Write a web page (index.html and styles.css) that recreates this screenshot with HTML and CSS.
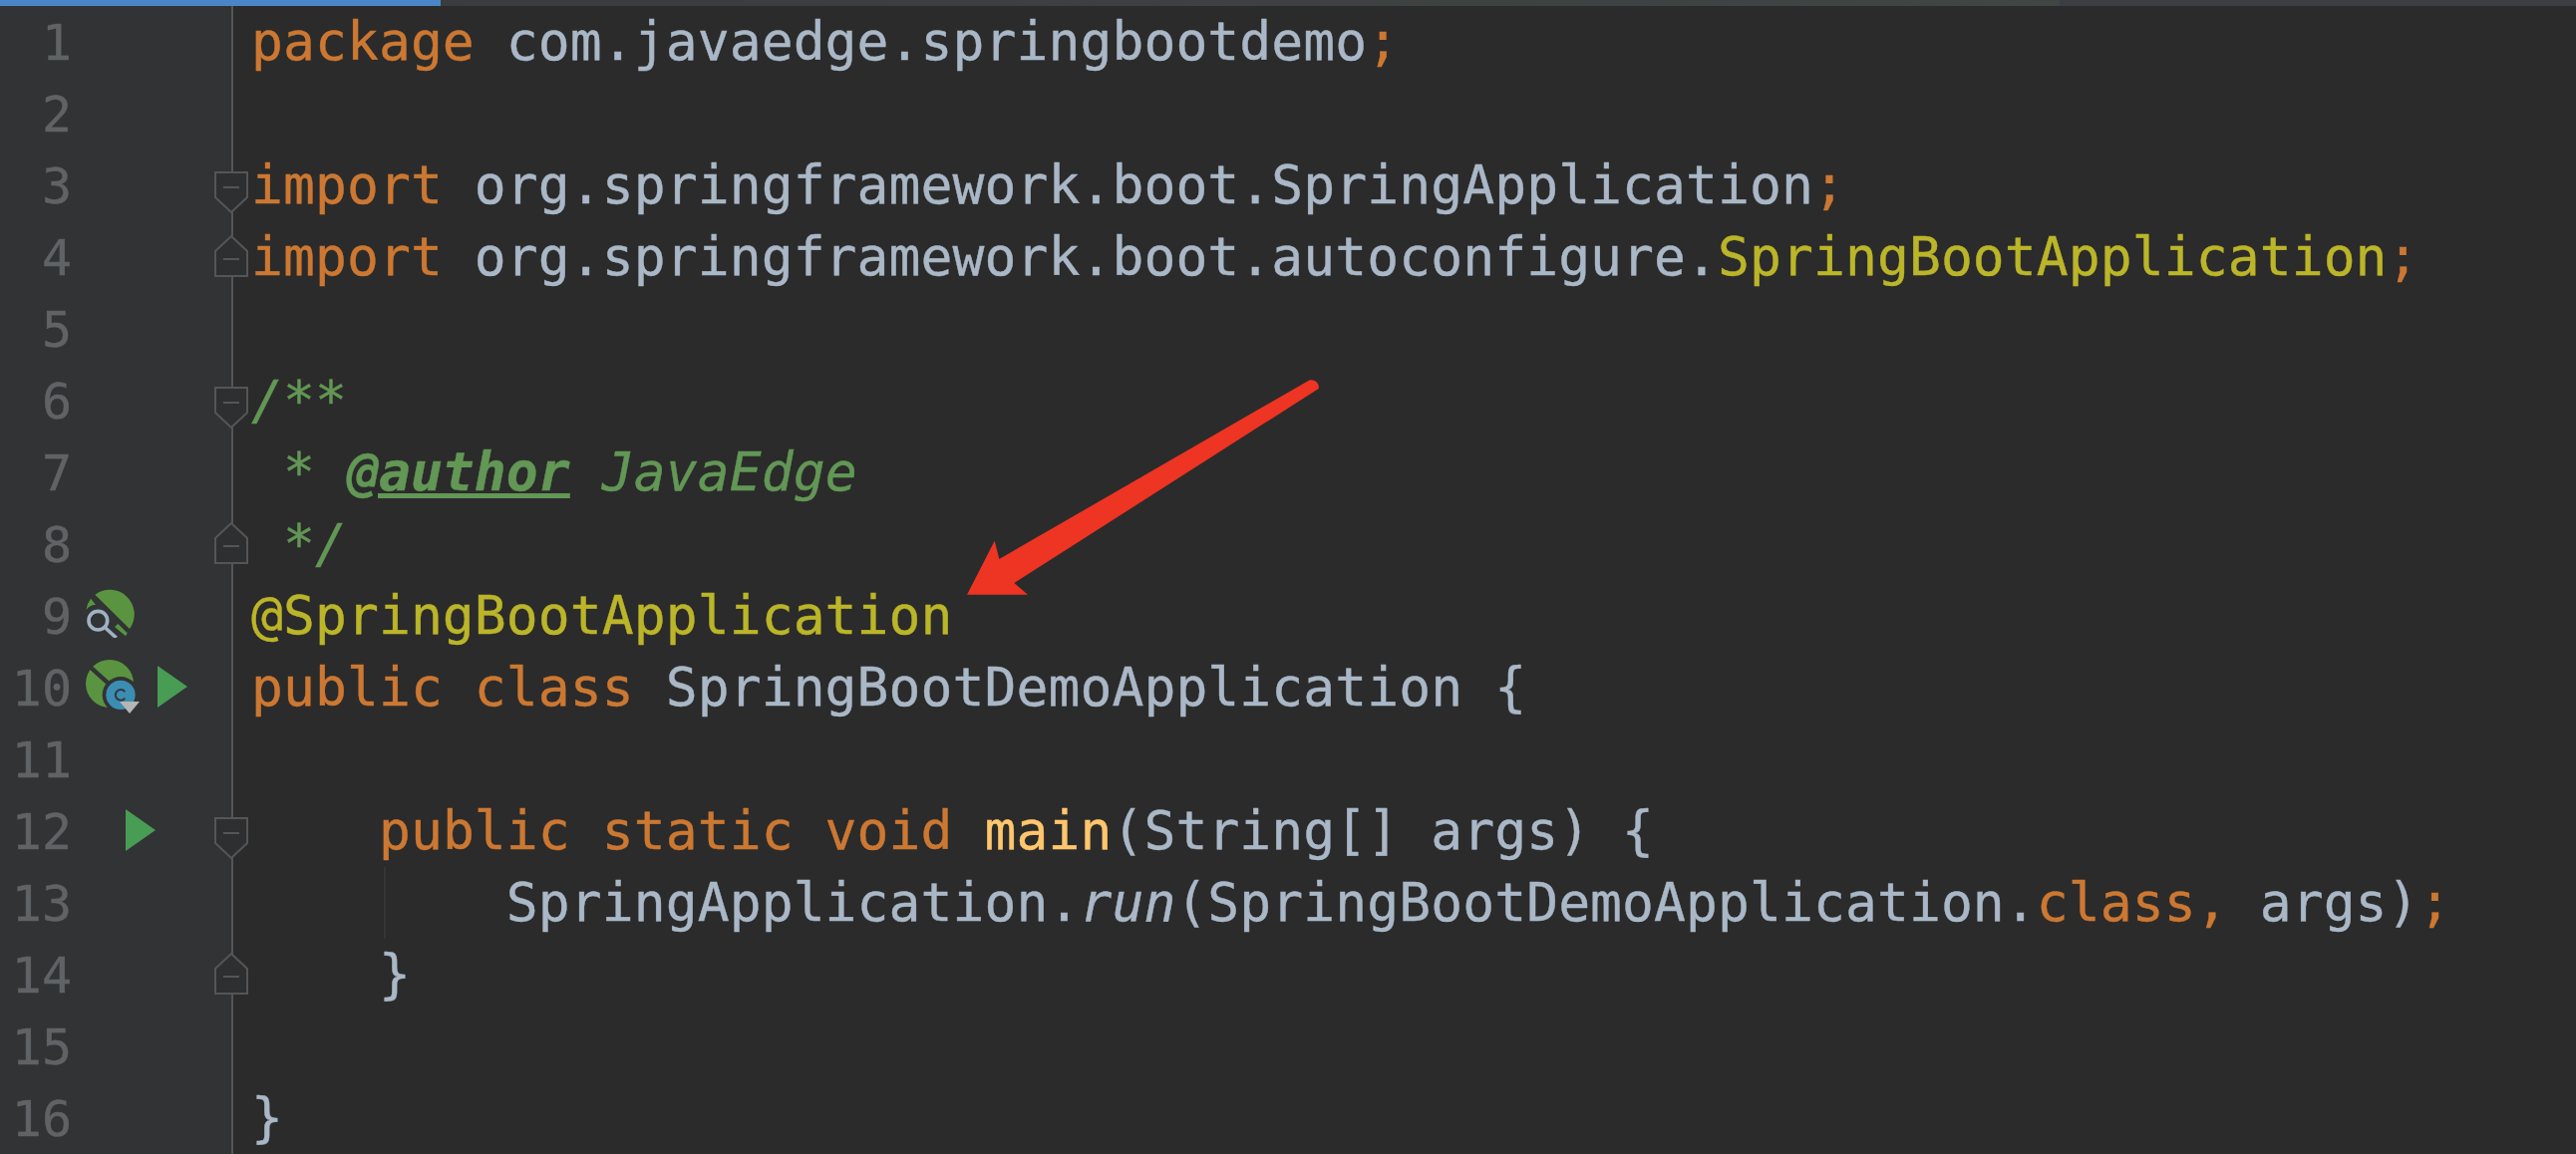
FILE: index.html
```html
<!DOCTYPE html>
<html lang="en">
<head>
<meta charset="utf-8">
<title>SpringBootDemoApplication.java</title>
<link rel="stylesheet" href="styles.css">
</head>
<body>
<div class="tabbar"><div class="tab-active"></div><div class="tab-mid"></div><div class="tab-end"></div></div>
<main class="editor">
  <aside class="gutter">
    <div class="grow"><span class="num">1</span></div>
    <div class="grow"><span class="num">2</span></div>
    <div class="grow"><span class="num">3</span><svg class="fold fold-open" viewBox="0 0 34 42"><path class="fold-shape" d="M1 1H33V26L17 41L1 26Z"/><path class="fold-minus" d="M9 16H25"/></svg></div>
    <div class="grow"><span class="num">4</span><svg class="fold fold-close" viewBox="0 0 34 42"><path class="fold-shape" d="M17 1L33 16V41H1V16Z"/><path class="fold-minus" d="M9 24H25"/></svg></div>
    <div class="grow"><span class="num">5</span></div>
    <div class="grow"><span class="num">6</span><svg class="fold fold-open" viewBox="0 0 34 42"><path class="fold-shape" d="M1 1H33V26L17 41L1 26Z"/><path class="fold-minus" d="M9 16H25"/></svg></div>
    <div class="grow"><span class="num">7</span></div>
    <div class="grow"><span class="num">8</span><svg class="fold fold-close" viewBox="0 0 34 42"><path class="fold-shape" d="M17 1L33 16V41H1V16Z"/><path class="fold-minus" d="M9 24H25"/></svg></div>
    <div class="grow"><span class="num">9</span>
      <svg class="bean bean-find" viewBox="75 30 150 150">
        <path class="leaf" d="M106 50A74 74 0 0 1 210 153Z"/>
        <path class="leaf" d="M79 96A74 74 0 0 1 93 62L108 80Q88 82 79 96Z"/>
        <path class="leaf" d="M175 138L203 166L198 175L165 147Z"/>
        <circle class="lens" cx="115" cy="128" r="28"/>
        <path class="lens" d="M137 150L170 180"/>
      </svg>
    </div>
    <div class="grow"><span class="num">10</span>
      <svg class="bean bean-class" viewBox="75 240 180 180">
        <circle class="leaf" cx="150" cy="318" r="72"/>
        <path class="bean-cut" d="M85 262L155 325"/>
        <circle class="bean-halo" cx="183" cy="352" r="55"/>
        <circle class="badge" cx="183" cy="352" r="44"/>
        <path class="badge-c" d="M196 342A16 16 0 1 0 196 362"/>
        <path class="badge-arrow" d="M180 372H240L210 408Z"/>
      </svg>
      <svg class="run run-class" viewBox="0 0 30 42"><path d="M0 0L30 21L0 42Z"/></svg>
    </div>
    <div class="grow"><span class="num">11</span></div>
    <div class="grow"><span class="num">12</span>
      <svg class="run run-method" viewBox="0 0 30 42"><path d="M0 0L30 21L0 42Z"/></svg>
      <svg class="fold fold-open" viewBox="0 0 34 42"><path class="fold-shape" d="M1 1H33V26L17 41L1 26Z"/><path class="fold-minus" d="M9 16H25"/></svg>
    </div>
    <div class="grow"><span class="num">13</span></div>
    <div class="grow"><span class="num">14</span><svg class="fold fold-close" viewBox="0 0 34 42"><path class="fold-shape" d="M17 1L33 16V41H1V16Z"/><path class="fold-minus" d="M9 24H25"/></svg></div>
    <div class="grow"><span class="num">15</span></div>
    <div class="grow"><span class="num">16</span></div>
  </aside>
  <section class="code">
    <div class="ln"><span class="kw">package</span> com.javaedge.springbootdemo<span class="kw">;</span></div>
    <div class="ln"></div>
    <div class="ln"><span class="kw">import</span> org.springframework.boot.SpringApplication<span class="kw">;</span></div>
    <div class="ln"><span class="kw">import</span> org.springframework.boot.autoconfigure.<span class="ann">SpringBootApplication</span><span class="kw">;</span></div>
    <div class="ln"></div>
    <div class="ln doc">/**</div>
    <div class="ln doc"> * <span class="doctag">@author</span> <span class="docval">JavaEdge</span></div>
    <div class="ln doc"> */</div>
    <div class="ln ann">@SpringBootApplication</div>
    <div class="ln"><span class="kw">public class</span> SpringBootDemoApplication {</div>
    <div class="ln"></div>
    <div class="ln">    <span class="kw">public static void</span> <span class="fn">main</span>(String[] args) {</div>
    <div class="ln guide">        SpringApplication.<em>run</em>(SpringBootDemoApplication.<span class="kw">class,</span> args)<span class="kw">;</span></div>
    <div class="ln">    }</div>
    <div class="ln"></div>
    <div class="ln">}</div>
    <svg class="arrow" viewBox="0 0 380 230"><path d="M30 226.7H91L77.3 215L382.7 20C384 14 378 10 373 11.7L62.3 191L57.7 172.7Z"/></svg>
  </section>
</main>
</body>
</html>
```
FILE: styles.css
```css
* { box-sizing: border-box; }
html, body { margin: 0; height: 100%; background: #2b2b2b; overflow: hidden; }
body { font-family: "DejaVu Sans Mono", "Liberation Mono", monospace; }

.tabbar { display: flex; height: 6px; background: #2b2b2b; }
.tab-active { width: 442px; background: #4a86c7; }
.tab-mid { width: 1624px; background: linear-gradient(90deg, #3a3c3e, #3f4644); }
.tab-end { flex: 1; background: #3b3f44; }

.editor { display: flex; height: 1152px; }

.gutter { width: 234px; flex: none; background: #313335; border-right: 2px solid #555555; }
.grow { position: relative; display: flex; align-items: flex-start; height: 72px; }
.num { width: 72px; margin-top: 1px; font-size: 50px; line-height: 72px; text-align: right; color: #606366; -webkit-text-stroke: 0.4px #606366; }

.fold { position: absolute; right: -17px; width: 34px; height: 42px; }
.fold-open { top: 22px; }
.fold-close { top: 14px; }
.fold-shape { fill: #2e2f31; stroke: #555555; stroke-width: 2; }
.fold-minus { fill: none; stroke: #555555; stroke-width: 2; }

.bean { flex: none; margin-left: 13px; }
.bean-find { width: 50px; height: 50px; margin-top: 8px; }
.bean-class { width: 60px; height: 60px; margin-top: 6px; }
.leaf { fill: #5a9440; }
.lens { fill: none; stroke: #9fb1c2; stroke-width: 11; }
.bean-cut { fill: none; stroke: #313335; stroke-width: 13; }
.bean-halo { fill: #313335; }
.badge { fill: #3c8db2; }
.badge-c { fill: none; stroke: #2c3a42; stroke-width: 6; }
.badge-arrow { fill: #b5b5b5; }

.run { flex: none; width: 30px; height: 42px; margin-top: 14px; fill: #499c54; }
.run-class { margin-left: 13px; }
.run-method { margin-left: 54px; }

.code { position: relative; flex: 1; padding-left: 18px; font-size: 53px; letter-spacing: 0.07px; line-height: 72px; color: #a9b7c6; -webkit-text-stroke: 0.4px; }
.ln { position: relative; height: 72px; white-space: pre; }
.kw { color: #cc7832; }
.ann { color: #bbb529; }
.fn { color: #ffc66d; }
.doc { color: #629755; font-style: italic; }
.doctag { font-weight: bold; text-decoration: underline; }
.docval { color: #629755; }
em { font-style: italic; }

.guide::before { content: ""; position: absolute; left: 133px; top: 0; bottom: 0; width: 2px; background: #353535; }

.arrow { position: absolute; left: 706px; top: 364px; width: 380px; height: 230px; overflow: visible; fill: #ee3423; }
```
